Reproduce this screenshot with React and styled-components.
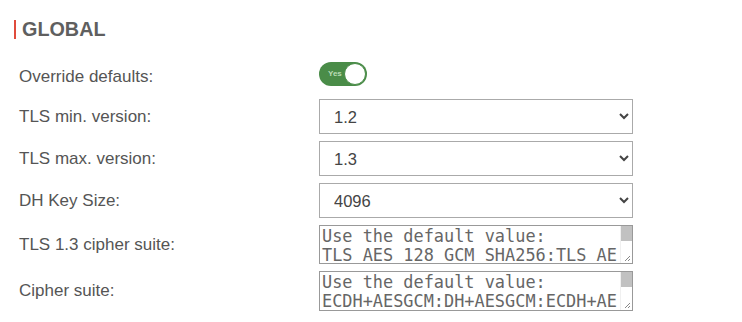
import React, { useState } from 'react';
import styled, { createGlobalStyle } from 'styled-components';

const GlobalStyle = createGlobalStyle`
  * {
    margin: 0;
    padding: 0;
    box-sizing: border-box;
  }

  body {
    background: #fff;
    font-family: "Liberation Sans", Arial, sans-serif;
    color: #555;
  }
`;

const Panel = styled.div`
  width: 742px;
  padding: 20px 0 0 14px;
`;

const Heading = styled.h2`
  border-left: 2px solid #e04b3c;
  padding-left: 6px;
  height: 19px;
  line-height: 19px;
  font-size: 19.8px;
  font-weight: bold;
  color: #5f5f5f;
`;

const Form = styled.div`
  display: grid;
  grid-template-columns: 300px 314px;
  row-gap: 7px;
  align-items: center;
  margin-top: 23px;
  padding-left: 5px;
`;

const Label = styled.label`
  font-size: 17px;
  color: #555;
`;

const ToggleCell = styled.div`
  height: 24px;
  margin-bottom: 6px;
  display: flex;
  align-items: center;
`;

const Toggle = styled.button`
  position: relative;
  width: 48px;
  height: 24px;
  border: none;
  border-radius: 12px;
  background: ${p => (p.$on ? '#4a8c48' : '#ccc')};
  cursor: pointer;
  font-family: "Liberation Sans", Arial, sans-serif;
`;

const ToggleText = styled.span`
  position: absolute;
  left: 9px;
  top: 7px;
  font-size: 8px;
  font-weight: bold;
  color: #b9dcb5;
`;

const Knob = styled.span`
  position: absolute;
  top: 1px;
  left: ${p => (p.$on ? '25px' : '1px')};
  width: 22px;
  height: 22px;
  border-radius: 50%;
  background: #fff;
  border: 1px solid #4a8c48;
`;

const Select = styled.select`
  width: 314px;
  height: 35px;
  padding: 0 10px;
  border: 1px solid #aaa;
  border-radius: 0;
  background: #fff;
  font-family: "Liberation Sans", Arial, sans-serif;
  font-size: 16.5px;
  color: #444;
`;

const TextBox = styled.div`
  display: flex;
  width: 314px;
  height: ${p => p.$h}px;
  border: 1px solid #999;
  background: #fff;
`;

const TextArea = styled.textarea`
  flex: 1;
  min-width: 0;
  height: 100%;
  padding: 1px 1px 1px 2px;
  border: none;
  outline: none;
  font-family: "DejaVu Sans Mono", monospace;
  font-size: 16.9px;
  line-height: 19px;
  color: #666;
  resize: none;
  overflow: hidden;
`;

const ScrollTrack = styled.div`
  width: 12px;
  display: flex;
  flex-direction: column;
  justify-content: space-between;
  align-items: flex-end;
  border-left: 1px solid #f0f0f0;
`;

const Thumb = styled.div`
  width: 11px;
  height: 15px;
  background: #c1c1c1;
`;

const Grip = () => (
  <svg width="7" height="7" viewBox="0 0 7 7" style={{ margin: '0 1px 1px 0' }}>
    <path d="M6 1 L1 6 M6 4 L4 6" stroke="#888" strokeWidth="1" fill="none" />
  </svg>
);

const CodeField = ({ h, value }) => (
  <TextBox $h={h}>
    <TextArea defaultValue={value} spellCheck={false} />
    <ScrollTrack>
      <Thumb />
      <Grip />
    </ScrollTrack>
  </TextBox>
);

const tls13 =
  'Use the default value:\nTLS_AES_128_GCM_SHA256:TLS_AES_256_GCM_SHA384:TLS_CHACHA20_POLY1305_SHA256';
const ciphers =
  'Use the default value:\nECDH+AESGCM:DH+AESGCM:ECDH+AES256:DH+AES256:ECDH+AES128:DH+AES:RSA+AESGCM:RSA+AES';

const App = () => {
  const [override, setOverride] = useState(true);

  return (
    <>
      <GlobalStyle />
      <Panel>
        <Heading>GLOBAL</Heading>
        <Form>
          <Label>Override defaults:</Label>
          <ToggleCell>
            <Toggle $on={override} onClick={() => setOverride(!override)}>
              {override && <ToggleText>Yes</ToggleText>}
              <Knob $on={override} />
            </Toggle>
          </ToggleCell>

          <Label>TLS min. version:</Label>
          <Select defaultValue="1.2">
            <option>1.0</option>
            <option>1.1</option>
            <option>1.2</option>
            <option>1.3</option>
          </Select>

          <Label>TLS max. version:</Label>
          <Select defaultValue="1.3">
            <option>1.2</option>
            <option>1.3</option>
          </Select>

          <Label>DH Key Size:</Label>
          <Select defaultValue="4096">
            <option>2048</option>
            <option>3072</option>
            <option>4096</option>
          </Select>

          <Label>TLS 1.3 cipher suite:</Label>
          <CodeField h={39} value={tls13} />

          <Label>Cipher suite:</Label>
          <CodeField h={40} value={ciphers} />
        </Form>
      </Panel>
    </>
  );
};

export default App;
